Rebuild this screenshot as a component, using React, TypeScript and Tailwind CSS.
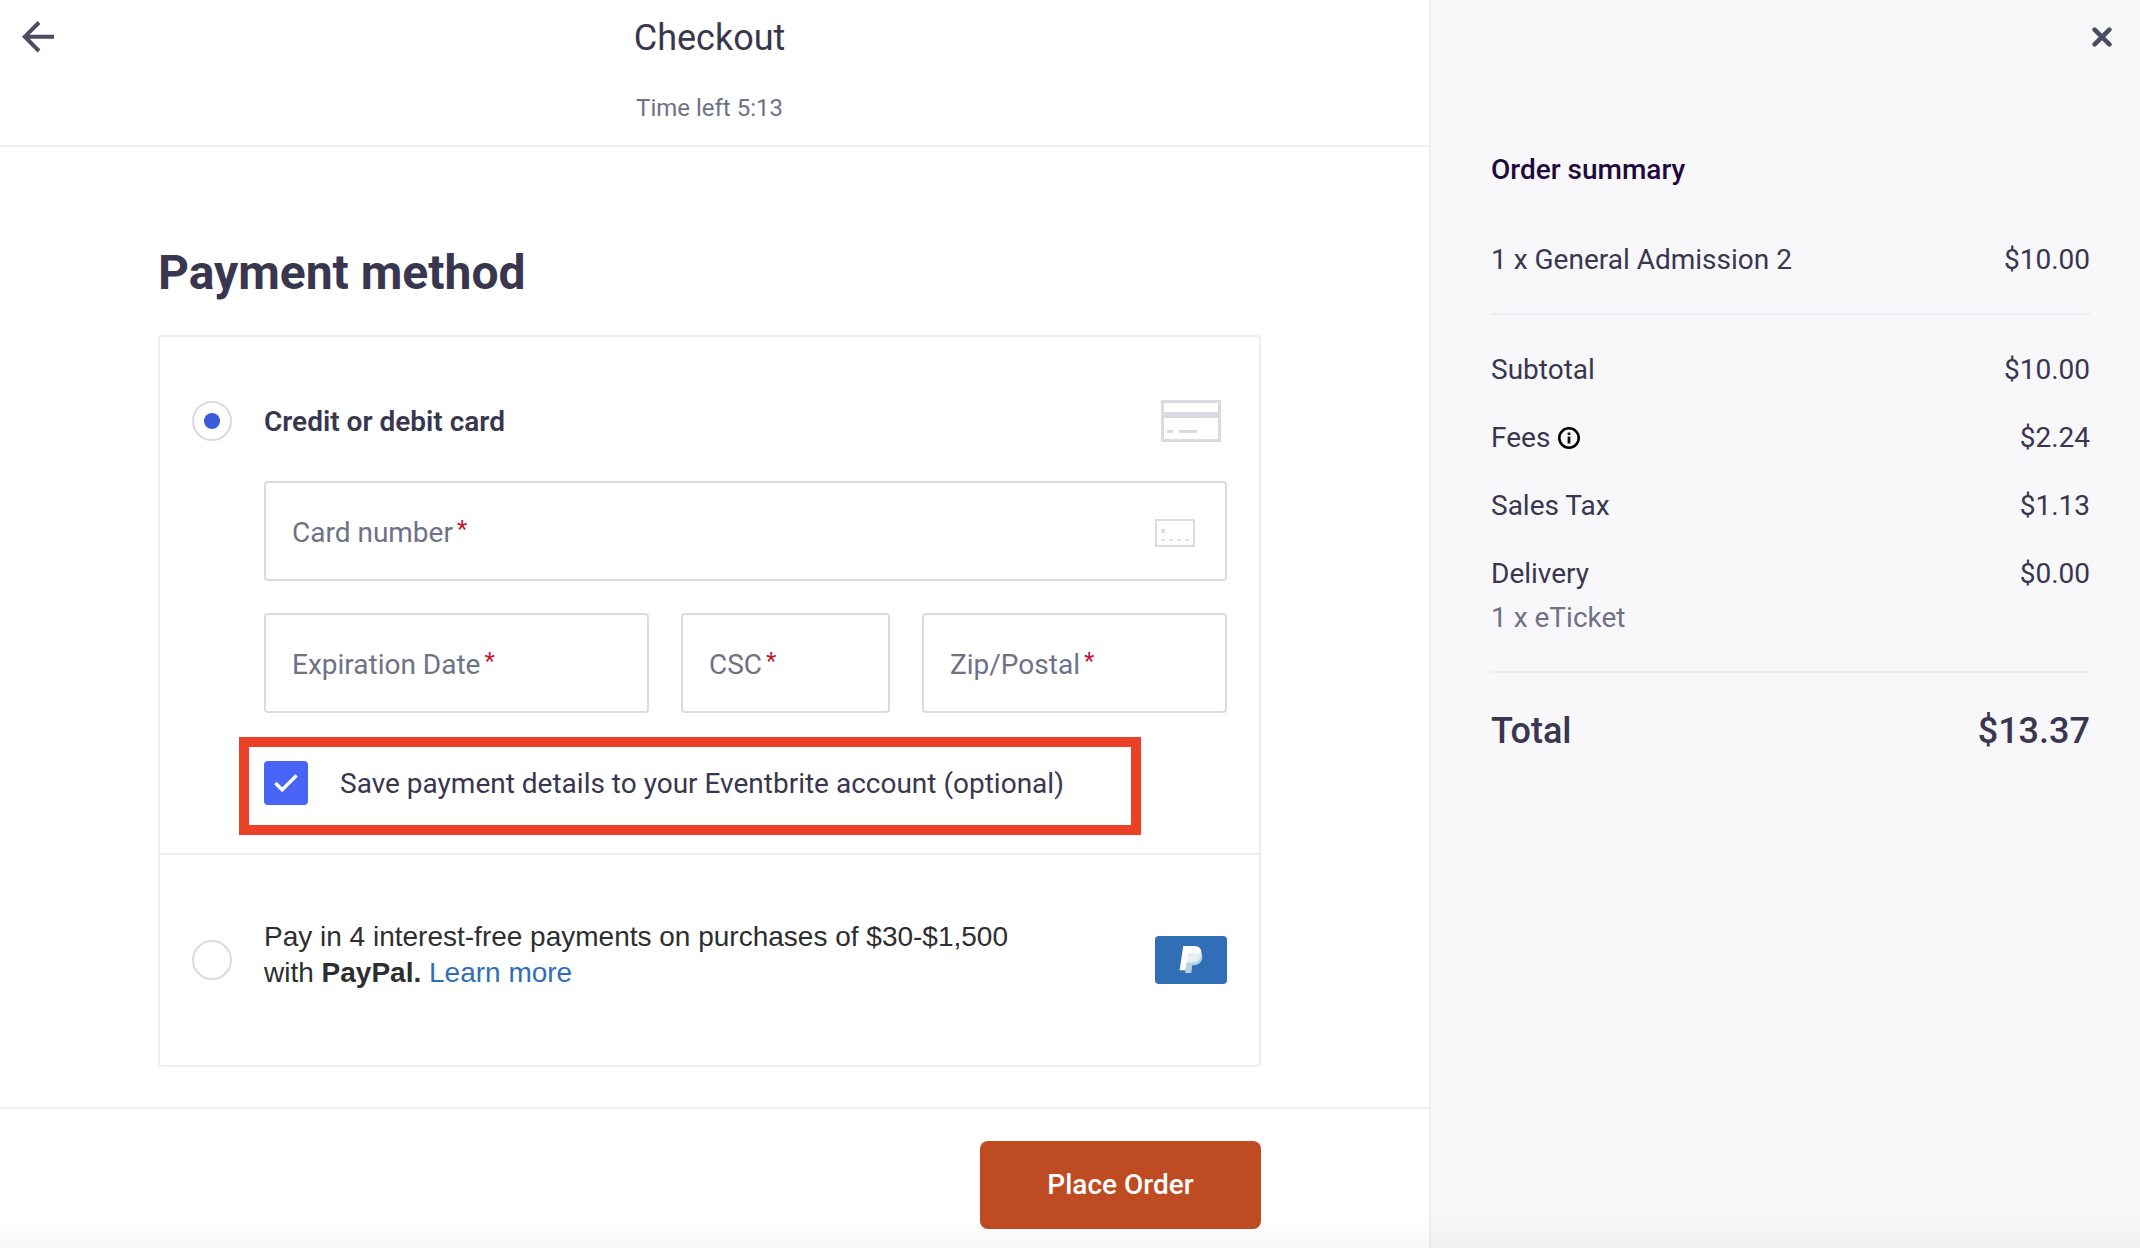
import React, { useState } from "react";

const ArrowLeftIcon = () => (
  <svg width="32" height="32" viewBox="0 0 32 32" fill="none" stroke="#4b4d63" strokeWidth="4">
    <path d="M17 1.5 2.8 15.7 17 30M3 15.7h29" />
  </svg>
);

const CloseIcon = () => (
  <svg width="20" height="20" viewBox="0 0 20 20" fill="none" stroke="#4b4d63" strokeWidth="4.6" strokeLinecap="round">
    <path d="M2.6 2.6l14.8 14.8M17.4 2.6L2.6 17.4" />
  </svg>
);

const InfoIcon = () => (
  <svg width="22" height="22" viewBox="0 0 22 22" fill="none">
    <circle cx="11" cy="11" r="9.7" stroke="#000" strokeWidth="2.6" />
    <path d="M9.6 5.4h2.8v2.6H9.6zM9.6 9.4h2.8v7.2H9.6z" fill="#111" />
  </svg>
);

const CreditCardIcon = () => (
  <svg width="60" height="42" viewBox="0 0 60 42" fill="#dbdae3">
    <path fillRule="evenodd" d="M0 0h60v42H0zM3 3v9h54V3zM3 18v21h54V18z" />
    <path d="M6 30h6v3H6zM18 30h18v3H18z" />
  </svg>
);

const CardNumberIcon = () => (
  <svg width="40" height="28" viewBox="0 0 40 28" fill="#dbdae3">
    <path fillRule="evenodd" d="M0 0h40v28H0zM2 2v24h36V2z" />
    <path d="M6 10h4v4H6zM6 20h4v2H6zM14 20h4v2h-4zM22 20h4v2h-4zM30 20h4v2h-4z" />
  </svg>
);

const PayPalBadge = () => (
  <svg width="72" height="48" viewBox="0 0 72 48" className="shrink-0">
    <rect width="72" height="48" rx="4" fill="#306fb5" />
    <path
      d="M33.2 17H45.8c1.4 1.2 1.8 3 1.4 5.2-1 4.9-4.4 7-8.8 7h-1.2L36.3 37H30z"
      fill="#b7d1e6"
    />
    <path
      d="M28.2 10H39c5.4 0 8.2 3.2 7.2 8.3-1 5.4-4.8 7.9-10.3 7.9h-4L30.4 34.3h-5.8z"
      fill="#fff"
    />
    <path d="M33.2 17h13.1c0 6.3-4.1 9.2-10.4 9.2h-4z" fill="#e8eff5" />
  </svg>
);

const radioClass =
  "grid h-10 w-10 shrink-0 cursor-pointer appearance-none place-items-center rounded-full border-2 border-[#dbdae3] bg-white before:h-4 before:w-4 before:rounded-full checked:before:bg-[#3d5adb] checked:before:content-['']";

type FieldProps = {
  id: string;
  label: string;
  icon?: React.ReactNode;
};

const Field: React.FC<FieldProps> = ({ id, label, icon }) => {
  const [value, setValue] = useState("");

  return (
    <div className="grid h-[100px] items-center">
      <input
        id={id}
        type="text"
        value={value}
        onChange={(e) => setValue(e.target.value)}
        required
        className="col-start-1 row-start-1 h-full w-full min-w-0 rounded border-2 border-[#dbdae3] bg-white px-[26px] text-[28px] outline-none focus:border-[#3d64ff]"
      />
      <div className="pointer-events-none col-start-1 row-start-1 flex items-center justify-between pt-1 pr-8 pl-7">
        <label
          htmlFor={id}
          className={`flex items-start gap-1 text-[28px] leading-9 whitespace-nowrap text-[#6f7287] ${
            value ? "invisible" : ""
          }`}
        >
          {label}
          <span className="text-[24px] leading-7 text-[#c5162e]">*</span>
        </label>
        {icon}
      </div>
    </div>
  );
};

type SummaryRowProps = {
  label: React.ReactNode;
  amount: string;
};

const SummaryRow: React.FC<SummaryRowProps> = ({ label, amount }) => (
  <div className="flex items-start justify-between">
    <dt>{label}</dt>
    <dd>{amount}</dd>
  </div>
);

const OrderSummary = () => (
  <aside className="w-[711px] shrink-0 border-l-2 border-[#eeedf2] bg-[#f8f7fa] pr-[50px] pl-[60px]">
    <div className="-mr-[22px] flex h-[148px] items-start justify-end pt-[27px]">
      <button type="button" aria-label="Close" className="cursor-pointer">
        <CloseIcon />
      </button>
    </div>

    <h2 className="text-[28px] leading-[44px] font-medium text-[#1e0a3c]">Order summary</h2>

    <dl className="mt-[46px] text-[28px] leading-[44px]">
      <SummaryRow label="1 x General Admission 2" amount="$10.00" />

      <div className="mt-[31px] flex flex-col gap-6 border-t-2 border-[#eeedf2] pt-[33px]">
        <SummaryRow label="Subtotal" amount="$10.00" />
        <SummaryRow
          label={
            <span className="flex items-center gap-2">
              Fees <InfoIcon />
            </span>
          }
          amount="$2.24"
        />
        <SummaryRow label="Sales Tax" amount="$1.13" />
        <SummaryRow
          label={
            <>
              Delivery
              <span className="block text-[#6f7287]">1 x eTicket</span>
            </>
          }
          amount="$0.00"
        />
      </div>

      <div className="mt-[31px] border-t-2 border-[#eeedf2] pt-8 text-[36px] leading-[52px] font-medium">
        <SummaryRow label="Total" amount="$13.37" />
      </div>
    </dl>
  </aside>
);

export default function App() {
  const [method, setMethod] = useState("card");
  const [saveDetails, setSaveDetails] = useState(true);

  return (
    <div className="flex min-h-screen bg-white font-[Roboto,sans-serif] text-[#39364f]">
      <form className="flex min-w-0 flex-1 flex-col" onSubmit={(e) => e.preventDefault()}>
        {/* Header */}
        <header className="grid grid-cols-[80px_1fr_90px] border-b-2 border-[#eeedf2] pt-3 pb-[21px]">
          <button
            type="button"
            aria-label="Back"
            className="flex h-[50px] cursor-pointer items-center pl-[22px]"
          >
            <ArrowLeftIcon />
          </button>
          <div className="text-center">
            <h1 className="text-[36px] leading-[52px]">Checkout</h1>
            <p className="mt-7 text-[24px] leading-8 text-[#6f7287]">Time left 5:13</p>
          </div>
        </header>

        <main className="flex-1 pt-24 pr-[168px] pb-10 pl-[158px]">
          <h2 className="text-[48px] leading-[60px] font-bold">Payment method</h2>

          <div className="mt-8 rounded border-2 border-[#eeedf2]">
            {/* Card payment */}
            <section className="pt-[62px] pr-8 pb-[18px] pl-8">
              <div className="flex items-center gap-8">
                <input
                  id="method-card"
                  type="radio"
                  name="method"
                  checked={method === "card"}
                  onChange={() => setMethod("card")}
                  className={radioClass}
                />
                <label
                  htmlFor="method-card"
                  className="flex-1 pt-0.5 text-[28px] leading-[42px] font-semibold"
                >
                  Credit or debit card
                </label>
                <div className="flex w-[72px] justify-center">
                  <CreditCardIcon />
                </div>
              </div>

              <div className="mt-[38px] ml-[72px]">
                <Field id="card-number" label="Card number" icon={<CardNumberIcon />} />
                <div className="mt-8 grid grid-cols-[385fr_209fr_305fr] gap-8">
                  <Field id="expiration" label="Expiration Date" />
                  <Field id="csc" label="CSC" />
                  <Field id="zip" label="Zip/Postal" />
                </div>

                <div className="mt-6 mr-[86px] -ml-[25px] flex items-center gap-8 border-10 border-[#eb4126] pt-[14px] pb-5 pl-[15px]">
                  <div className="grid h-11 w-11 place-items-center">
                    <input
                      id="save-details"
                      type="checkbox"
                      checked={saveDetails}
                      onChange={(e) => setSaveDetails(e.target.checked)}
                      className="col-start-1 row-start-1 h-11 w-11 cursor-pointer appearance-none rounded border-2 border-[#dbdae3] checked:border-[#4865f8] checked:bg-[#4865f8]"
                    />
                    {saveDetails && (
                      <svg
                        width="24"
                        height="20"
                        viewBox="0 0 24 20"
                        fill="none"
                        stroke="#fff"
                        strokeWidth="3.4"
                        className="pointer-events-none col-start-1 row-start-1"
                      >
                        <path d="M1.4 10 8.2 16.8 22.6 2.4" />
                      </svg>
                    )}
                  </div>
                  <label
                    htmlFor="save-details"
                    className="pt-0.5 text-[28px] leading-[42px] whitespace-nowrap"
                  >
                    Save payment details to your Eventbrite account (optional)
                  </label>
                </div>
              </div>
            </section>

            {/* PayPal */}
            <section className="flex items-center gap-8 border-t-2 border-[#eeedf2] px-8 py-16">
              <input
                id="method-paypal"
                type="radio"
                name="method"
                checked={method === "paypal"}
                onChange={() => setMethod("paypal")}
                className={radioClass}
              />
              <label
                htmlFor="method-paypal"
                className="flex-1 pb-[10px] font-['Liberation_Sans',sans-serif] text-[28px] leading-9 text-[#2c2e2f]"
              >
                Pay in 4 interest-free payments on purchases of $30-$1,500
                <br />
                with <b>PayPal.</b>{" "}
                <a href="#learn-more" className="text-[#306fb5]">
                  Learn more
                </a>
              </label>
              <PayPalBadge />
            </section>
          </div>
        </main>

        <footer className="flex justify-end border-t-2 border-[#eeedf2] pt-8 pr-[168px] pb-[19px]">
          <button
            type="submit"
            className="h-[88px] w-[281px] cursor-pointer rounded-lg bg-[#bf4b23] text-[28px] font-medium text-white"
          >
            Place Order
          </button>
        </footer>
      </form>

      <OrderSummary />

      {/* Soft fade along the bottom edge */}
      <div className="pointer-events-none fixed inset-x-0 bottom-0 h-8 bg-linear-to-t from-black/3 to-transparent" />
    </div>
  );
}
